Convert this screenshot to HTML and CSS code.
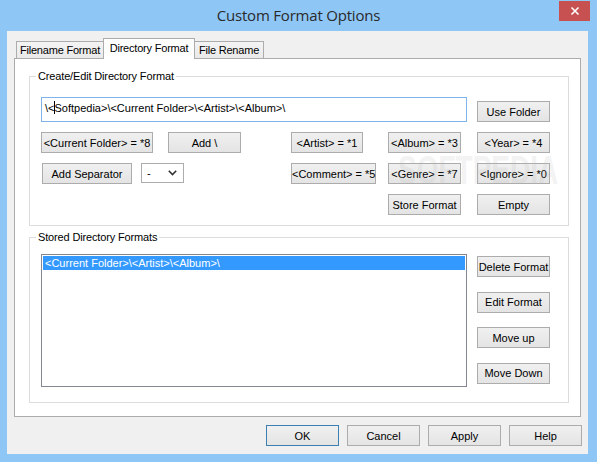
FILE: index.html
```html
<!DOCTYPE html>
<html lang="en">
<head>
    <meta charset="UTF-8">
    <title>Custom Format Options</title>
    <link rel="stylesheet" href="styles.css">
</head>
<body>
<div class="window">
    <div class="titlebar">
        <span></span>
        <div class="title">Custom Format Options</div>
        <div class="close">
            <svg width="10" height="10" viewBox="0 0 10 10">
                <path d="M1.5 1.5 L8.5 8.5 M8.5 1.5 L1.5 8.5" stroke="#fff" stroke-width="1.6"/>
            </svg>
        </div>
    </div>

    <div class="client">
        <div class="tabs">
            <div class="tab tab-first">Filename Format</div>
            <div class="tab active">Directory Format</div>
            <div class="tab tab-last">File Rename</div>
        </div>

        <div class="panel">
            <fieldset class="group group-edit">
                <legend>Create/Edit Directory Format</legend>
                <div class="fmt-grid">
                    <div class="edit">\&lt;<span class="caret"></span>Softpedia&gt;\&lt;Current Folder&gt;\&lt;Artist&gt;\&lt;Album&gt;\</div>
                    <button class="btn col-e row-1">Use Folder</button>

                    <button class="btn col-a row-2">&lt;Current Folder&gt; = *8</button>
                    <button class="btn col-b row-2">Add \</button>
                    <button class="btn col-c row-2 narrow">&lt;Artist&gt; = *1</button>
                    <button class="btn col-d row-2">&lt;Album&gt; = *3</button>
                    <button class="btn col-e row-2">&lt;Year&gt; = *4</button>

                    <div class="sep-row row-3">
                        <button class="btn sep-btn">Add Separator</button>
                        <div class="combo">
                            <span>-</span>
                            <svg width="9" height="6" viewBox="0 0 9 6">
                                <path d="M0.8 0.8 L4.5 4.5 L8.2 0.8" fill="none" stroke="#333" stroke-width="1.6"/>
                            </svg>
                        </div>
                    </div>
                    <button class="btn col-c row-3">&lt;Comment&gt; = *5</button>
                    <button class="btn col-d row-3">&lt;Genre&gt; = *7</button>
                    <button class="btn col-e row-3">&lt;Ignore&gt; = *0</button>

                    <button class="btn col-d row-4">Store Format</button>
                    <button class="btn col-e row-4">Empty</button>
                </div>
            </fieldset>

            <fieldset class="group group-stored">
                <legend>Stored Directory Formats</legend>
                <div class="stored">
                    <div class="listbox">
                        <div class="item selected">&lt;Current Folder&gt;\&lt;Artist&gt;\&lt;Album&gt;\</div>
                    </div>
                    <div class="side-buttons">
                        <button class="btn">Delete Format</button>
                        <button class="btn">Edit Format</button>
                        <button class="btn">Move up</button>
                        <button class="btn">Move Down</button>
                    </div>
                </div>
            </fieldset>

            <div class="watermark" aria-hidden="true">SOFTPEDIA</div>
        </div>

        <div class="dialog-buttons">
            <button class="btn default">OK</button>
            <button class="btn">Cancel</button>
            <button class="btn">Apply</button>
            <button class="btn">Help</button>
        </div>
    </div>
</div>
</body>
</html>
```

FILE: styles.css
```css
body {
    margin: 0;
    font-family: "Liberation Sans", Arial, sans-serif;
    font-size: 11px;
    color: #000;
}

.window {
    width: 597px;
    height: 462px;
    background-color: #8ec6f6;
    display: flex;
    flex-direction: column;
}

/* title bar */
.titlebar {
    height: 31px;
    display: grid;
    grid-template-columns: 1fr auto 1fr;
    align-items: start;
}

.title {
    font-family: "Open Sans", "Noto Sans", sans-serif;
    font-size: 15px;
    line-height: 30px;
    color: #2a2a2a;
    letter-spacing: -0.2px;
}

.close {
    justify-self: end;
    width: 31px;
    height: 20px;
    margin: 1px 7px 0 0;
    background-color: #c75050;
    display: flex;
    align-items: center;
    justify-content: center;
}

/* client area */
.client {
    flex: 1;
    margin: 0 9px 8px 7px;
    padding: 7px 7px 0 7px;
    background-color: #f0f0f0;
    display: flex;
    flex-direction: column;
}

.tabs {
    display: flex;
    align-items: flex-end;
    height: 20px;
    padding-left: 2px;
}

.tab {
    height: 17px;
    box-sizing: border-box;
    border: 1px solid #acacac;
    border-bottom: none;
    background: linear-gradient(#f4f4f4, #e9e9e9);
    display: flex;
    align-items: center;
    justify-content: center;
    letter-spacing: -0.2px;
}

.tab-first {
    width: 87px;
    border-right: none;
}

.tab-last {
    width: 69px;
    border-left: none;
}

.tab.active {
    width: 92px;
    height: 21px;
    margin-bottom: -1px;
    background: #fff;
    padding-bottom: 3px;
    position: relative;
    z-index: 1;
}

.panel {
    height: 359px;
    box-sizing: border-box;
    border: 1px solid #acacac;
    background-color: #fff;
    padding: 10px 11px 0 14px;
    position: relative;
    overflow: hidden;
}

/* group boxes */
.group {
    margin: 0;
    min-width: 0;
    border: 1px solid #dcdcdc;
    padding: 14px 17px 10px 11px;
}

.group legend {
    padding: 0 2px;
    margin-left: -5px;
    line-height: 14px;
    letter-spacing: -0.15px;
}

.group-stored {
    margin-top: 4px;
    padding: 10px 17px 15px 11px;
}

.fmt-grid {
    display: grid;
    grid-template-columns: 112px 15px 73px 50px 85px 12px 73px 16px 73px;
    grid-template-rows: 25px 21px 21px 21px;
    row-gap: 10px;
}

.col-a { grid-column: 1; }
.col-b { grid-column: 3; }
.col-c { grid-column: 5; }
.col-d { grid-column: 7; }
.col-e { grid-column: 9; }
.row-1 { grid-row: 1; }
.row-2 { grid-row: 2; }
.row-3 { grid-row: 3; }
.row-4 { grid-row: 4; }

.edit {
    grid-column: 1 / 9;
    grid-row: 1;
    width: 426px;
    box-sizing: border-box;
    border: 1px solid #7eb4ea;
    padding: 3px 3px 0 3px;
    line-height: 15px;
    white-space: nowrap;
}

.caret {
    display: inline-block;
    width: 1px;
    height: 13px;
    background-color: #000;
    vertical-align: -2px;
    margin-right: -1px;
}

.row-1.btn {
    height: 21px;
    align-self: end;
}

/* buttons */
.btn {
    font-family: inherit;
    font-size: 11px;
    color: #000;
    height: 21px;
    padding: 0;
    box-sizing: border-box;
    border: 1px solid #acacac;
    background: linear-gradient(#f0f0f0, #e4e4e4);
    white-space: nowrap;
}

.btn.narrow {
    width: 72px;
}

.btn.default {
    border-color: #3c7fb1;
}

.sep-row {
    grid-column: 1 / 4;
    display: flex;
}

.sep-btn {
    width: 90px;
    margin-left: 1px;
}

.combo {
    width: 43px;
    height: 20px;
    box-sizing: border-box;
    margin-left: 9px;
    border: 1px solid #acacac;
    background-color: #fff;
    display: flex;
    align-items: center;
    justify-content: space-between;
    padding: 0 6px 0 5px;
}

/* stored formats */
.stored {
    display: flex;
    gap: 10px;
}

.listbox {
    width: 426px;
    height: 133px;
    box-sizing: border-box;
    border: 1px solid #828790;
    background-color: #fff;
    padding: 1px;
}

.item {
    height: 14px;
    line-height: 14px;
    padding-left: 2px;
    white-space: nowrap;
}

.item.selected {
    background-color: #3399ff;
    color: #fff;
}

.side-buttons {
    width: 73px;
    padding-top: 2px;
    display: flex;
    flex-direction: column;
    gap: 14.5px;
}

/* bottom row */
.dialog-buttons {
    display: flex;
    justify-content: flex-end;
    gap: 8px;
    margin: 8px -1px 0 0;
}

.dialog-buttons .btn {
    width: 73px;
}

/* faint site watermark over the buttons */
.watermark {
    position: absolute;
    left: 383px;
    top: 88px;
    font-weight: bold;
    font-size: 40px;
    line-height: 46px;
    color: rgba(180, 180, 180, 0.18);
    transform: scaleX(0.7);
    transform-origin: left top;
    pointer-events: none;
}
```
